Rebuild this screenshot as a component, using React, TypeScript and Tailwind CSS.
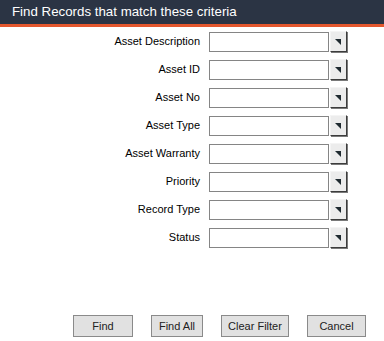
const fields = [
  "Asset Description",
  "Asset ID",
  "Asset No",
  "Asset Type",
  "Asset Warranty",
  "Priority",
  "Record Type",
  "Status",
];

const buttons = [
  { label: "Find", w: "w-[60px]" },
  { label: "Find All", w: "w-[52px]" },
  { label: "Clear Filter", w: "w-[68px]" },
  { label: "Cancel", w: "w-[59px]" },
];

const DropButton = () => (
  <div className="ml-[1px] flex h-[21px] w-[17px] items-center justify-center border border-t-[#f4f4f4] border-l-[#f4f4f4] border-r-[#3c3c3c] border-b-[#3c3c3c] bg-[#ececec] shadow-[1px_1px_0_#7a7a7a]">
    <svg width="7" height="7" viewBox="0 0 7 7">
      <polygon points="0,1 6,1 6,7" fill="#1f2a30" />
    </svg>
  </div>
);

const App = () => {
  return (
    <div className="w-[384px] h-[341px] bg-white flex flex-col font-['Liberation_Sans',Arial,sans-serif] text-[11px] text-black">
      <div className="h-[27px] bg-[#2b3444] border-b-[3px] border-[#e4572e] flex items-center px-[12px]">
        <span className="text-white text-[13.3px] leading-none">Find Records that match these criteria</span>
      </div>

      <div className="mt-[4px] flex flex-col gap-[7px]">
        {fields.map((f) => (
          <div key={f} className="flex items-center h-[21px]">
            <div className="w-[200px] text-right">{f}</div>
            <div className="ml-[9px] h-[20px] w-[120px] border border-[#858585] bg-white" />
            <DropButton />
          </div>
        ))}
      </div>

      <div className="mt-auto mb-[4px] flex justify-end gap-[18px] pr-[18px]">
        {buttons.map((b) => (
          <button
            key={b.label}
            className={`${b.w} h-[22px] bg-[#e1e1e1] border border-[#8a8a8a] text-[11px] text-[#222]`}
          >
            {b.label}
          </button>
        ))}
      </div>
    </div>
  );
};

export default App;
